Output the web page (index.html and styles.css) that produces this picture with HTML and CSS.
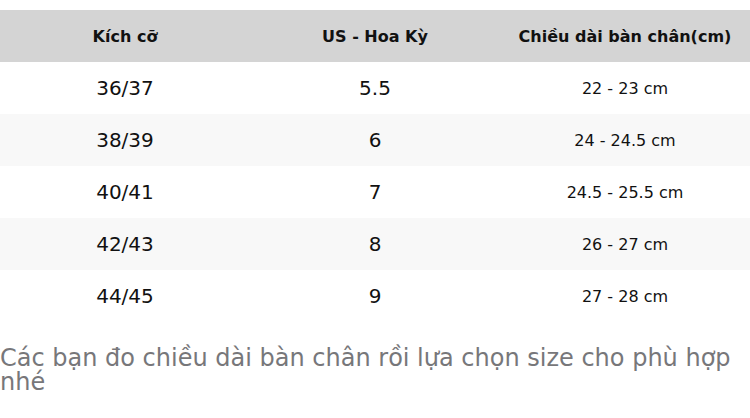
FILE: index.html
```html
<!DOCTYPE html>
<html lang="vi">
<head>
<meta charset="utf-8">
<title>Bảng size</title>
<link rel="stylesheet" href="styles.css">
</head>
<body>
<table class="size-table">
  <thead>
    <tr><th>Kích cỡ</th><th>US - Hoa Kỳ</th><th>Chiều dài bàn chân(cm)</th></tr>
  </thead>
  <tbody>
    <tr><td>36/37</td><td>5.5</td><td class="len">22 - 23 cm</td></tr>
    <tr><td>38/39</td><td>6</td><td class="len">24 - 24.5 cm</td></tr>
    <tr><td>40/41</td><td>7</td><td class="len">24.5 - 25.5 cm</td></tr>
    <tr><td>42/43</td><td>8</td><td class="len">26 - 27 cm</td></tr>
    <tr><td>44/45</td><td>9</td><td class="len">27 - 28 cm</td></tr>
  </tbody>
</table>
<p class="note">Các bạn đo chiều dài bàn chân rồi lựa chọn size cho phù hợp nhé</p>
</body>
</html>
```
FILE: styles.css
```css
html, body {
  margin: 0;
  padding: 0;
  background: #ffffff;
  font-family: "DejaVu Sans", sans-serif;
}

.size-table {
  width: 750px;
  margin-top: 10px;
  border-collapse: collapse;
  table-layout: fixed;
}

.size-table th,
.size-table td {
  height: 52px;
  padding: 0;
  text-align: center;
  vertical-align: middle;
  color: #111111;
}

.size-table th {
  background: #d4d4d4;
  font-size: 16px;
  font-weight: bold;
}

.size-table td {
  font-size: 20px;
}

.size-table td.len {
  font-size: 16px;
}

.size-table tbody tr:nth-child(even) td {
  background: #f8f8f8;
}

.note {
  margin: 24px 0 0 0;
  font-size: 24px;
  line-height: 24px;
  color: #77777a;
}
```
